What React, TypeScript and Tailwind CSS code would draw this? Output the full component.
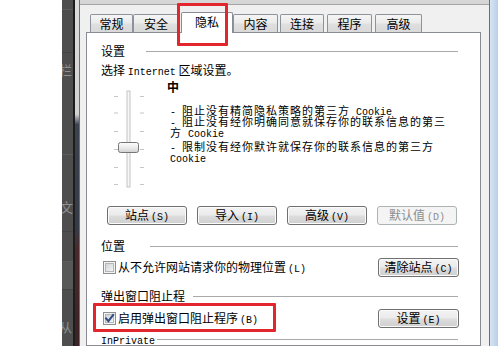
import React from 'react'

const L = ({ children }: { children: React.ReactNode }) => (
  <span className="font-['Liberation_Mono',monospace] text-[10px] leading-[6px] tracking-normal">{children}</span>
)

const P = ({ children }: { children: React.ReactNode }) => (
  <span className="ml-[2px] font-['Liberation_Mono',monospace] text-[10px] leading-[6px] tracking-normal">{children}</span>
)

const tabs = [
  { label: '常规', cls: 'ml-[4px] w-[43px]' },
  { label: '安全', cls: 'ml-0 w-[46px]' },
  { label: '隐私', cls: 'ml-[2px] w-[52px]', active: true },
  { label: '内容', cls: 'ml-0 w-[45px]' },
  { label: '连接', cls: 'ml-[2px] w-[44px]' },
  { label: '程序', cls: 'ml-[3px] w-[45px]' },
  { label: '高级', cls: 'ml-[3px] w-[47px]' },
]

function GroupHeader({ label, w }: { label: React.ReactNode; w: string }) {
  return (
    <div className="flex items-center h-[12px] whitespace-nowrap">
      <div className={`${w} h-[12px] -mt-[1px]`}>{label}</div>
      <div className="flex-1 h-px bg-[#a9a9a9] mr-px" />
    </div>
  )
}

function Btn({
  children,
  disabled,
  w = 'w-[80px]',
}: {
  children: React.ReactNode
  disabled?: boolean
  w?: string
}) {
  return (
    <div
      className={`${w} h-[19px] pt-[2px] text-center rounded-[3px] border whitespace-nowrap ${
        disabled
          ? 'border-[#adb2b5] bg-[#f4f4f4] text-[#8d8d8d]'
          : 'border-[#707070] bg-[linear-gradient(to_bottom,#f3f3f3_0%,#ebebeb_48%,#dddddd_52%,#cfcfcf_100%)] text-black shadow-[inset_0_0_0_1px_#fbfbfb]'
      }`}
    >
      <div className="h-[13px]">{children}</div>
    </div>
  )
}

function CheckBox({ checked, id }: { checked?: boolean; id: string }) {
  return (
    <svg width="13" height="13" viewBox="0 0 13 13" className="shrink-0">
      <defs>
        <linearGradient id={id} x1="0" y1="0" x2="1" y2="1">
          <stop offset="0" stopColor="#cfd2d6" />
          <stop offset="1" stopColor="#f6f6f6" />
        </linearGradient>
      </defs>
      <rect x="0.5" y="0.5" width="12" height="12" fill="#f4f4f4" stroke="#8e8f8f" />
      <rect x="2.5" y="2.5" width="8" height="8" fill={`url(#${id})`} stroke="#b3b7bd" />
      {checked && (
        <path
          d="M3 6.3 L5.4 9.2 L10.2 3"
          fill="none"
          stroke="#2f4c86"
          strokeWidth="2"
          strokeLinecap="square"
        />
      )}
    </svg>
  )
}

function Slider() {
  const ticks = [7, 23.5, 42, 60, 78, 95]
  return (
    <svg width="34" height="100" viewBox="0 0 34 100" className="shrink-0 block">
      <defs>
        <linearGradient id="thumb" x1="0" y1="0" x2="0" y2="1">
          <stop offset="0" stopColor="#fdfdfd" />
          <stop offset="0.5" stopColor="#ececec" />
          <stop offset="1" stopColor="#cfcfcf" />
        </linearGradient>
      </defs>
      {ticks.map((y) => (
        <g key={y}>
          <rect x="2" y={y} width="4" height="1" fill="#c6c6c6" />
          <rect x="28" y={y} width="4" height="1" fill="#c6c6c6" />
        </g>
      ))}
      <rect x="15" y="2" width="3" height="96" fill="#f7f7f7" stroke="#c3c3c3" strokeWidth="1" />
      <rect x="6.5" y="53.5" width="20" height="10" rx="2" fill="url(#thumb)" stroke="#767676" />
    </svg>
  )
}

export default function App() {
  return (
    <div className="relative w-[498px] h-[346px] overflow-hidden bg-white flex font-['Noto_Sans_CJK_SC',sans-serif] text-[12px] leading-[12px] text-black">
      <div className="w-[62px] shrink-0 bg-white" />

      <div className="w-[11px] shrink-0 bg-[#4e4e4e] flex flex-col overflow-hidden text-[13px] leading-[14px] text-[#8f8f8f]">
        <div className="h-[10px] border-b border-[#5d5d5d]" />
        <div className="h-[43px] border-b border-[#444]" />
        <div className="h-[102px] border-b border-[#5d5d5d] pt-[10px] -ml-[3px]">栏</div>
        <div className="h-[77px] border-b border-[#444] pt-[45px] -ml-[2px]">文</div>
        <div className="h-[30px] border-b border-[#5d5d5d]" />
        <div className="h-[28px] bg-[#585858] border-b border-[#444]" />
        <div className="flex-1 pt-[30px] -ml-[3px]">从</div>
      </div>

      <div className="w-[2px] shrink-0 bg-[#1d1d1d]" />
      <div className="w-[4px] shrink-0 bg-[linear-gradient(to_bottom,#dcdcdc_0%,#d2d2d2_33%,#3c4350_36%,#353b47_66%,#4d292c_72%,#3a2225_100%)]" />
      <div className="w-px shrink-0 bg-[#6b6f76]" />

      <div className="w-[409px] shrink-0 flex flex-col bg-[#f0f0f0]">
        <div className="h-[5px] shrink-0 bg-[#d6d6d6] border-b border-[#a5a5a5]" />
        <div className="flex-1 min-h-0 flex flex-col pl-[6px] pr-[8px] pt-[7px]">
          <div className="h-[21px] flex items-start shrink-0">
            {tabs.map((t) =>
              t.active ? (
                <div
                  key={t.label}
                  className={`${t.cls} relative z-10 h-[21px] bg-white border border-b-0 border-[#898c95] rounded-t-[2px] flex items-center justify-center pb-[2px]`}
                >
                  {t.label}
                </div>
              ) : (
                <div
                  key={t.label}
                  className={`${t.cls} mt-[2px] h-[18px] border border-b-0 border-[#8e929a] rounded-t-[2px] bg-[linear-gradient(to_bottom,#f5f5f5_0%,#ebebeb_45%,#dfdfdf_55%,#d9d9d9_100%)] flex items-center justify-center`}
                >
                  {t.label}
                </div>
              ),
            )}
          </div>

          <div className="flex-1 min-h-0 -mt-px border border-[#898c95] bg-white pl-[14px] pr-[21px] pt-[13px] flex flex-col overflow-hidden">
            <GroupHeader label="设置" w="w-[45px]" />
            <div className="mt-[7px] h-[12px] whitespace-pre">
              选择 <L>Internet</L> 区域设置。
            </div>

            <div className="mt-[3px] flex">
              <div className="ml-[11px] mt-[10px]">
                <Slider />
              </div>
              <div className="ml-[21px] flex flex-col">
                <div className="mt-[2px] h-[12px] font-bold">中</div>
                <div className="mt-[12px] ml-[3px] whitespace-pre text-[11px] tracking-[1px] leading-[11px]">
                  <div className="h-[11px]">
                    <L>- </L>阻止没有精简隐私策略的第三方<L> Cookie</L>
                  </div>
                  <div className="h-[11px]">
                    <L>- </L>阻止没有经你明确同意就保存你的联系信息的第三
                  </div>
                  <div className="h-[11px]">
                    方<L> Cookie</L>
                  </div>
                  <div className="mt-[3px] h-[11px]">
                    <L>- </L>限制没有经你默许就保存你的联系信息的第三方
                  </div>
                  <div className="h-[11px]">
                    <L>Cookie</L>
                  </div>
                </div>
              </div>
            </div>

            <div className="mt-[17px] ml-[6px] flex gap-[10px]">
              <Btn>
                站点<P>(S)</P>
              </Btn>
              <Btn>
                导入<P>(I)</P>
              </Btn>
              <Btn>
                高级<P>(V)</P>
              </Btn>
              <Btn disabled>
                默认值<P>(D)</P>
              </Btn>
            </div>

            <div className="mt-[15px]">
              <GroupHeader label="位置" w="w-[49px]" />
            </div>
            <div className="mt-[6px] flex items-center justify-between">
              <div className="flex items-center ml-[2px] gap-[2px] whitespace-nowrap">
                <CheckBox id="cb1" />
                <div className="h-[13px]">
                  从不允许网站请求你的物理位置<P>(L)</P>
                </div>
              </div>
              <Btn w="w-[81px]">
                清除站点<P>(C)</P>
              </Btn>
            </div>

            <div className="mt-[13px]">
              <GroupHeader label="弹出窗口阻止程" w="w-[92px]" />
            </div>
            <div className="mt-[7px] flex items-center justify-between">
              <div className="flex items-center ml-[2px] gap-[2px] whitespace-nowrap">
                <CheckBox id="cb2" checked />
                <div className="h-[13px]">
                  启用弹出窗口阻止程序<P>(B)</P>
                </div>
              </div>
              <Btn w="w-[81px]">
                设置<P>(E)</P>
              </Btn>
            </div>

            <div className="mt-[5px]">
              <GroupHeader label={<L>InPrivate</L>} w="w-[56px]" />
            </div>
          </div>
        </div>
      </div>

      <div className="w-px shrink-0 bg-[#66707c]" />
      <div className="w-[8px] shrink-0 bg-[linear-gradient(to_right,#d6e5f4,#b9cfe7)]" />

      <div className="absolute left-[177px] top-[3px] w-[51px] h-[43px] border-[3px] border-[#e3262d] rounded-[1px] pointer-events-none z-20" />
      <div className="absolute left-[93px] top-[303px] w-[183px] h-[29px] border-[3px] border-[#e3262d] rounded-[1px] pointer-events-none z-20" />
    </div>
  )
}
